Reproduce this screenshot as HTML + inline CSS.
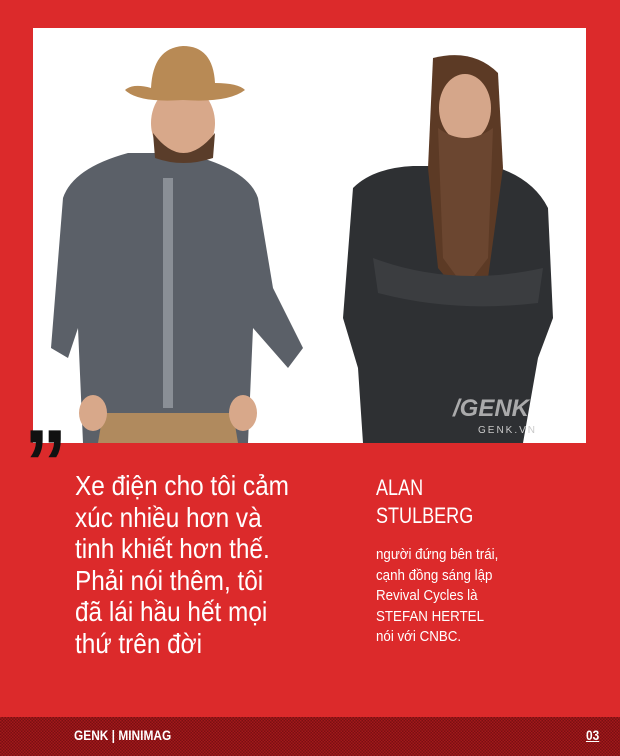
<!DOCTYPE html>
<html><head><meta charset="utf-8"><style>
body{margin:0;width:620px;height:756px;background:#dc2a2b;position:relative;overflow:hidden;font-family:"Liberation Sans Narrow","Liberation Sans",sans-serif;color:#fff}
.photo{position:absolute;left:33px;top:28px;width:553px;height:415px;background:#fff;overflow:hidden}
.q{position:absolute;left:75px;top:470px;font-size:28px;line-height:31.5px;transform:scaleX(0.87);transform-origin:0 0;white-space:nowrap}
.n{position:absolute;left:376px;top:474px;font-size:22px;line-height:28px;transform:scaleX(0.82);transform-origin:0 0}
.s{position:absolute;left:376px;top:545px;font-size:14.5px;line-height:20.5px;transform:scaleX(0.92);transform-origin:0 0;white-space:nowrap}
.bar{position:absolute;left:0;top:717px;width:620px;height:39px;background:#8e1416;background-image:repeating-conic-gradient(#7a0f12 0 25%,#a3181b 0 50%);background-size:3px 3px}
.bar span{position:absolute;top:10px;font-size:14px;font-weight:bold;transform:scaleX(0.85);transform-origin:0 0}
.qm{position:absolute;left:24px;top:424px;font-family:"Liberation Sans",sans-serif;font-size:96px;font-weight:bold;color:#111;line-height:80px;transform:scaleX(0.9);transform-origin:0 0}
</style></head><body>
<div class="photo">
<svg width="553" height="415" viewBox="0 0 553 415">
<path d="M30 170 Q40 140 95 125 L150 125 Q215 140 225 170 L240 260 L270 320 L255 340 L220 300 L215 415 L50 415 L45 300 L35 330 L18 320 Z" fill="#5b6068"/>
<path d="M70 385 L200 385 L205 415 L65 415Z" fill="#b08a5e"/>
<rect x="130" y="150" width="10" height="230" fill="#8a8f96"/>
<ellipse cx="150" cy="95" rx="32" ry="38" fill="#d8a88a"/>
<path d="M120 105 Q150 145 182 105 L180 130 Q150 140 122 130Z" fill="#5a3d2a"/>
<path d="M92 62 Q100 55 118 60 Q120 20 150 18 Q180 18 182 55 Q205 55 212 62 Q195 75 150 72 Q105 75 92 62Z" fill="#b88a55"/>
<ellipse cx="60" cy="385" rx="14" ry="18" fill="#d8a88a"/><ellipse cx="210" cy="385" rx="14" ry="18" fill="#d8a88a"/>
<path d="M320 160 Q340 140 380 138 L460 138 Q500 150 515 180 L520 290 L505 330 L490 415 L330 415 L325 340 L310 290 Z" fill="#2e3033"/>
<path d="M400 30 Q440 20 465 45 L470 140 L455 250 L430 270 L405 240 L395 140 Z" fill="#5c3a25"/>
<ellipse cx="432" cy="80" rx="26" ry="34" fill="#d5a68a"/>
<path d="M405 100 Q432 120 460 100 L455 230 L432 260 L410 230Z" fill="#6b4630"/>
<path d="M340 230 Q420 260 510 240 L505 275 Q420 285 345 265Z" fill="#3b3d40"/>
<text x="420" y="388" font-family="Liberation Sans" font-weight="bold" font-style="italic" font-size="24" fill="#c9c9c9" opacity="0.8">/GENK</text>
<text x="445" y="405" font-family="Liberation Sans" font-size="10" fill="#c9c9c9" letter-spacing="2">GENK.VN</text>
</svg>
</div>
<div class="qm">”</div>
<div class="q">Xe điện cho tôi cảm<br>xúc nhiều hơn và<br>tinh khiết hơn thế.<br>Phải nói thêm, tôi<br>đã lái hầu hết mọi<br>thứ trên đời</div>
<div class="n">ALAN<br>STULBERG</div>
<div class="s">người đứng bên trái,<br>cạnh đồng sáng lập<br>Revival Cycles là<br>STEFAN HERTEL<br>nói với CNBC.</div>
<div class="bar"><span style="left:74px">GENK | MINIMAG</span><span style="left:586px;text-decoration:underline">03</span></div>
</body></html>
